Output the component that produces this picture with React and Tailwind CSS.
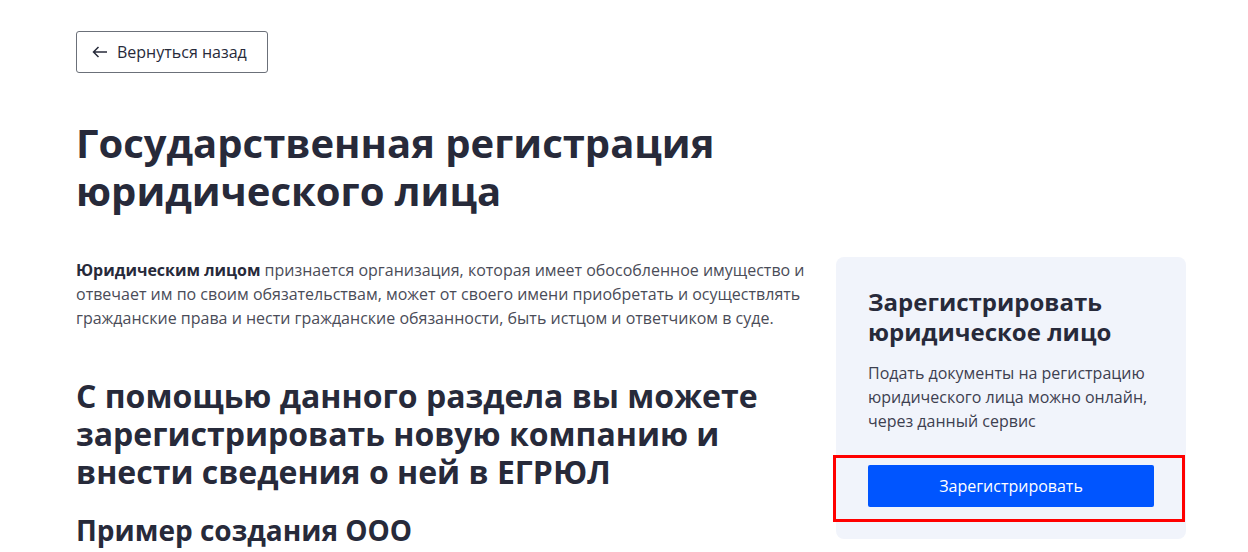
import React from 'react';

export default function App() {
  return (
    <div className="min-h-screen bg-white font-['Open_Sans',sans-serif] text-[#272a3a]">
      <div className="pl-[76px] pr-[62px] pt-[31px]">
        {/* back link */}
        <button className="flex h-[42px] w-[192px] items-center gap-[9px] rounded-[3px] border border-[#6b7079] pl-[15px] text-[16px] text-[#272a3a]">
          <svg width="16" height="16" viewBox="0 0 16 16" fill="none" stroke="currentColor" strokeWidth="1.5">
            <path d="M15 8H1.5M6.5 3L1.5 8 6.5 13" />
          </svg>
          Вернуться назад
        </button>

        <h1 className="mt-[46px] text-[40px] font-bold leading-[48px]">
          Государственная регистрация<br />юридического лица
        </h1>

        <div className="mt-[43px] flex items-start justify-between">
          {/* left column */}
          <div className="w-[736px]">
            <p className="text-[16px] leading-[24px] text-[#4a4c58]">
              <b className="font-bold text-[#272a3a]">Юридическим лицом</b> признается организация, которая имеет обособленное имущество и отвечает им по своим обязательствам, может от своего имени приобретать и осуществлять гражданские права и нести гражданские обязанности, быть истцом и ответчиком в суде.
            </p>
            <h2 className="mt-[47px] text-[32px] font-bold leading-[38px]">
              С помощью данного раздела вы можете зарегистрировать новую компанию и внести сведения о ней в ЕГРЮЛ
            </h2>
            <h3 className="mt-[21px] text-[28px] font-bold leading-[36px]">Пример создания ООО</h3>
          </div>

          {/* side card */}
          <div className="-mt-[1px] w-[350px] rounded-lg bg-[#f1f4fb] px-8 pb-8 pt-[30px]">
            <h4 className="text-[24px] font-bold leading-[30px]">Зарегистрировать юридическое лицо</h4>
            <p className="mt-[14px] text-[16px] leading-[24px] text-[#3d4050]">
              Подать документы на регистрацию юридического лица можно онлайн, через данный сервис
            </p>
            <div className="relative mt-[32px]">
              <button className="h-[42px] w-full rounded-[2px] bg-[#0055ff] text-[16px] text-white">
                Зарегистрировать
              </button>
              <div className="pointer-events-none absolute -bottom-[15px] -left-[35px] -right-[31px] -top-[10px] border-[3px] border-[#ff0000]"></div>
            </div>
          </div>
        </div>
      </div>
    </div>
  );
}
